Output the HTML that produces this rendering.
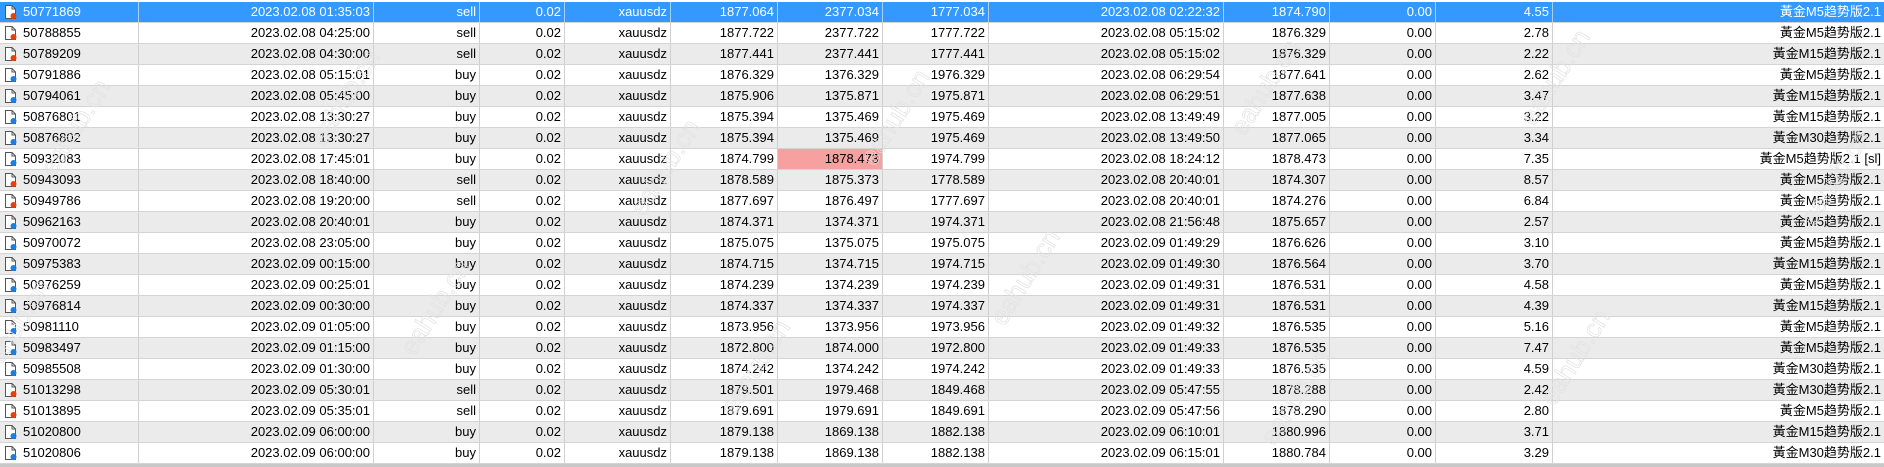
<!DOCTYPE html>
<html><head><meta charset="utf-8"><style>
*{margin:0;padding:0;box-sizing:border-box}
html,body{width:1884px;height:467px;overflow:hidden;background:#fff;font-family:"Liberation Sans","Noto Sans CJK SC",sans-serif;font-size:13px;color:#000}
.row{position:absolute;left:0;width:1884px;height:21px;border-bottom:1px solid #d4d4d4}
.c{position:absolute;top:0;height:20px;line-height:20px;text-align:right;padding-right:3px;border-right:1px solid #d0d0d0;white-space:nowrap;overflow:hidden}
.c0{text-align:left;padding-left:23px}
.g{background:#ebebeb}
.sel{background:#3399ff;color:#fff}
.sel .c{border-right-color:#a9d0f5}
.ic{position:absolute;left:5px;top:3px;width:12px;height:14px}
.wm{position:absolute;font-size:26px;color:transparent;-webkit-text-stroke:0.7px #e2e2e2;transform:rotate(-58deg);transform-origin:left bottom;white-space:nowrap;font-family:"Liberation Sans",sans-serif;pointer-events:none}
</style></head><body>
<div id="t"></div>
<div style="position:absolute;left:0;top:464px;width:1884px;height:3px;background:#c8c8c8"></div>
<script>
var W=[139,235,106,85,106,107,105,106,235,106,106,117,331];
var D=[
["50771869","2023.02.08 01:35:03","sell","1877.064","2377.034","1777.034","2023.02.08 02:22:32","1874.790","4.55","黃金M5趋势版2.1"],
["50788855","2023.02.08 04:25:00","sell","1877.722","2377.722","1777.722","2023.02.08 05:15:02","1876.329","2.78","黃金M5趋势版2.1"],
["50789209","2023.02.08 04:30:00","sell","1877.441","2377.441","1777.441","2023.02.08 05:15:02","1876.329","2.22","黃金M15趋势版2.1"],
["50791886","2023.02.08 05:15:01","buy","1876.329","1376.329","1976.329","2023.02.08 06:29:54","1877.641","2.62","黃金M5趋势版2.1"],
["50794061","2023.02.08 05:45:00","buy","1875.906","1375.871","1975.871","2023.02.08 06:29:51","1877.638","3.47","黃金M15趋势版2.1"],
["50876801","2023.02.08 13:30:27","buy","1875.394","1375.469","1975.469","2023.02.08 13:49:49","1877.005","3.22","黃金M15趋势版2.1"],
["50876802","2023.02.08 13:30:27","buy","1875.394","1375.469","1975.469","2023.02.08 13:49:50","1877.065","3.34","黃金M30趋势版2.1"],
["50932083","2023.02.08 17:45:01","buy","1874.799","1878.473","1974.799","2023.02.08 18:24:12","1878.473","7.35","黃金M5趋势版2.1 [sl]"],
["50943093","2023.02.08 18:40:00","sell","1878.589","1875.373","1778.589","2023.02.08 20:40:01","1874.307","8.57","黃金M5趋势版2.1"],
["50949786","2023.02.08 19:20:00","sell","1877.697","1876.497","1777.697","2023.02.08 20:40:01","1874.276","6.84","黃金M5趋势版2.1"],
["50962163","2023.02.08 20:40:01","buy","1874.371","1374.371","1974.371","2023.02.08 21:56:48","1875.657","2.57","黃金M5趋势版2.1"],
["50970072","2023.02.08 23:05:00","buy","1875.075","1375.075","1975.075","2023.02.09 01:49:29","1876.626","3.10","黃金M5趋势版2.1"],
["50975383","2023.02.09 00:15:00","buy","1874.715","1374.715","1974.715","2023.02.09 01:49:30","1876.564","3.70","黃金M15趋势版2.1"],
["50976259","2023.02.09 00:25:01","buy","1874.239","1374.239","1974.239","2023.02.09 01:49:31","1876.531","4.58","黃金M5趋势版2.1"],
["50976814","2023.02.09 00:30:00","buy","1874.337","1374.337","1974.337","2023.02.09 01:49:31","1876.531","4.39","黃金M15趋势版2.1"],
["50981110","2023.02.09 01:05:00","buy","1873.956","1373.956","1973.956","2023.02.09 01:49:32","1876.535","5.16","黃金M5趋势版2.1"],
["50983497","2023.02.09 01:15:00","buy","1872.800","1874.000","1972.800","2023.02.09 01:49:33","1876.535","7.47","黃金M5趋势版2.1"],
["50985508","2023.02.09 01:30:00","buy","1874.242","1374.242","1974.242","2023.02.09 01:49:33","1876.535","4.59","黃金M30趋势版2.1"],
["51013298","2023.02.09 05:30:01","sell","1879.501","1979.468","1849.468","2023.02.09 05:47:55","1878.288","2.42","黃金M30趋势版2.1"],
["51013895","2023.02.09 05:35:01","sell","1879.691","1979.691","1849.691","2023.02.09 05:47:56","1878.290","2.80","黃金M5趋势版2.1"],
["51020800","2023.02.09 06:00:00","buy","1879.138","1869.138","1882.138","2023.02.09 06:10:01","1880.996","3.71","黃金M15趋势版2.1"],
["51020806","2023.02.09 06:00:00","buy","1879.138","1869.138","1882.138","2023.02.09 06:15:01","1880.784","3.29","黃金M30趋势版2.1"]];
var h="";
D.forEach(function(r,i){
 var cells=[r[0],r[1],r[2],"0.02","xauusdz",r[3],r[4],r[5],r[6],r[7],"0.00",r[8],r[9]];
 var cls="row"+(i==0?" sel":(i%2==0?" g":""));
 h+='<div class="'+cls+'" style="top:'+(2+21*i)+'px">';
 var x=0;
 var dot=r[2]=="sell"?"#e8400c":"#1a7fe0";
 cells.forEach(function(v,j){
  var st='left:'+x+'px;width:'+W[j]+'px;';
  if(i==7&&j==6)st+='background:#f6a0a0;';
  if(j==12)st+='border-right:none;';
  h+='<div class="c c'+j+'" style="'+st+'">';
  if(j==0)h+='<svg class="ic" viewBox="0 0 12 14"><path d="M0.5 0.5H7L10.5 4V13.5H0.5Z" fill="#fff" stroke="#555" stroke-width="1"/><path d="M7 0.5V4H10.5" fill="none" stroke="#555"/><circle cx="8.5" cy="11" r="3" fill="'+dot+'"/></svg>';
  h+=v+'</div>';
  x+=W[j];
 });
 h+='</div>';
});
var wm=[[60,150],[330,120],[650,190],[880,140],[1250,110],[1540,100],[0,350],[420,330],[740,390],[1010,300],[1280,420],[1560,380],[1820,200]];
wm.forEach(function(p){h+='<div class="wm" style="left:'+p[0]+'px;top:'+p[1]+'px">eahub.cn</div>';});
document.getElementById("t").innerHTML=h;
</script>
</body></html>
